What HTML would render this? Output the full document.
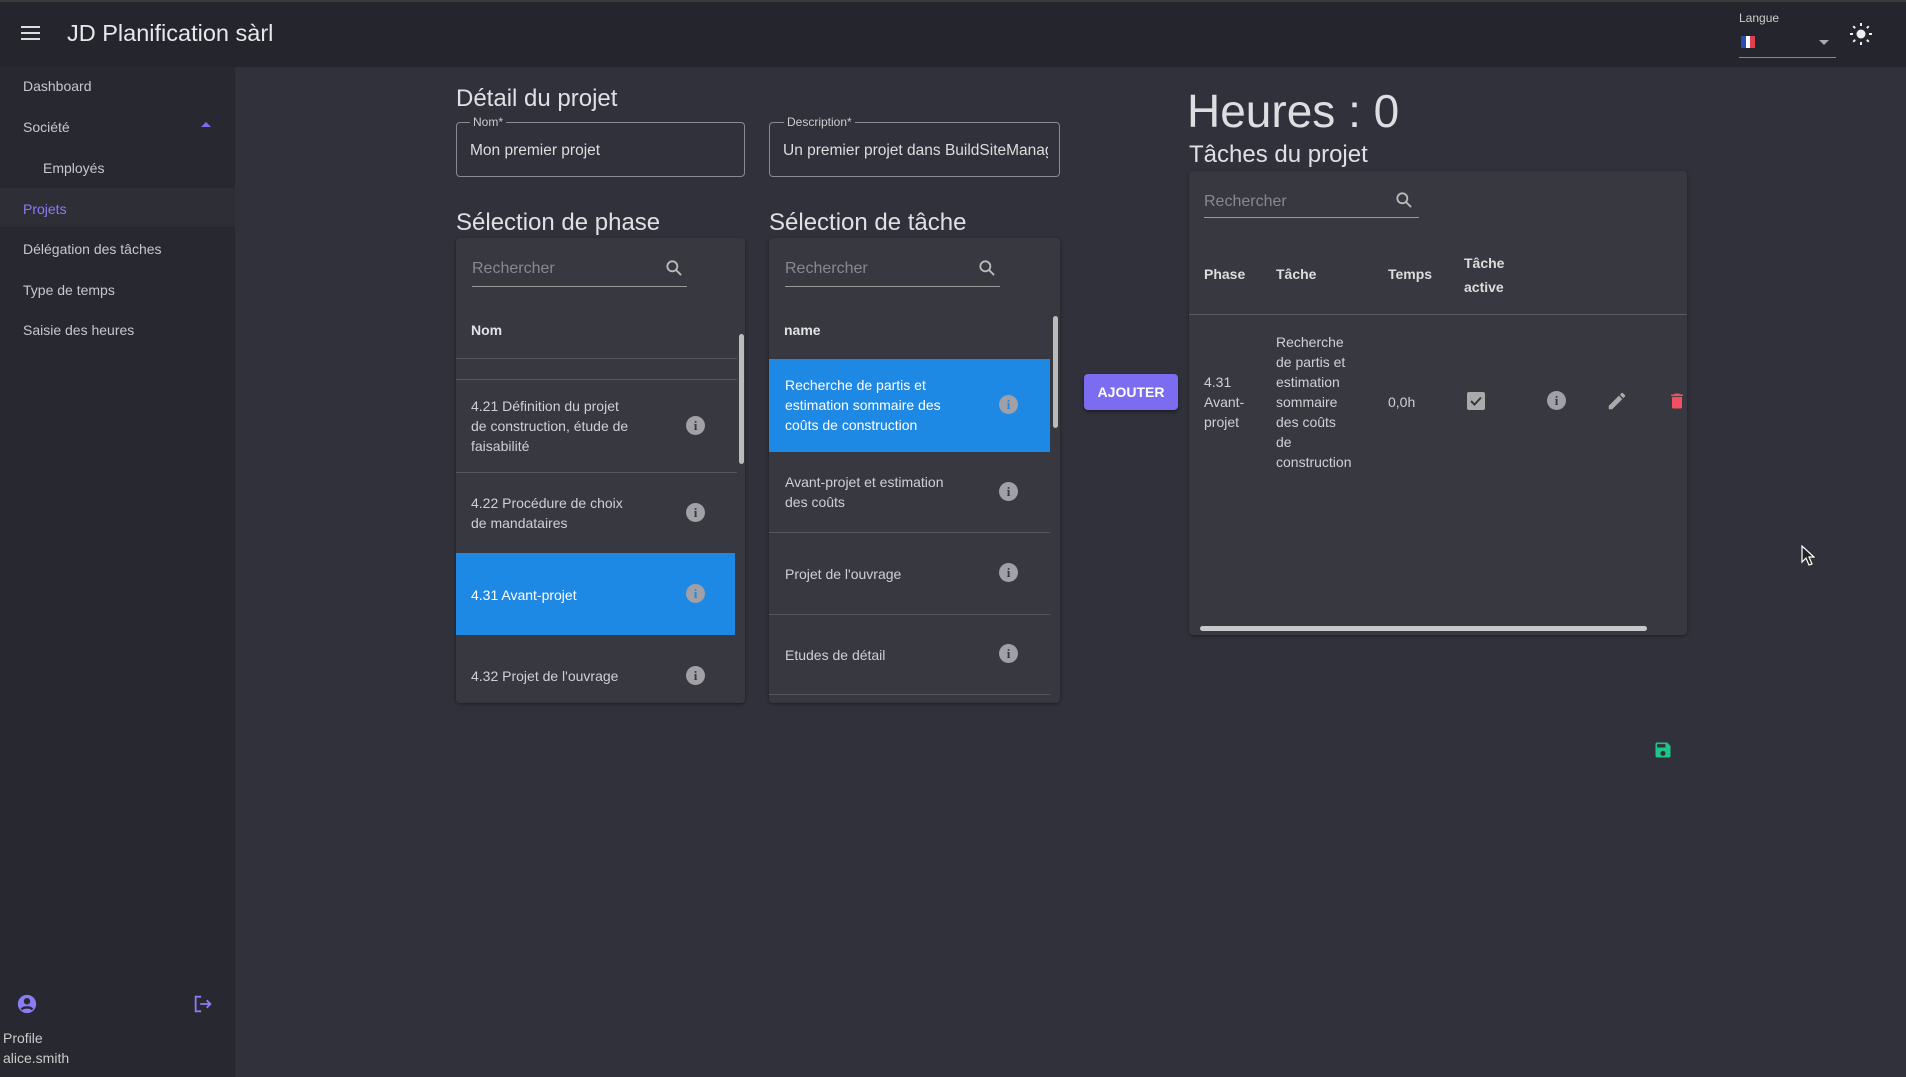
<!DOCTYPE html>
<html><head><meta charset="utf-8"><style>
*{box-sizing:border-box;margin:0;padding:0}
body{width:1906px;height:1077px;overflow:hidden;background:#30313a;font-family:"Liberation Sans",sans-serif;color:#e2e2e6;position:relative}
.a{position:absolute}
.hdr{left:0;top:0;width:1906px;height:67px;background:#25262d;border-top:2px solid #3a3a3a}
.side{left:0;top:67px;width:235px;height:1010px;background:#272830}
.si{position:absolute;left:23px;font-size:14px;color:#c8c8cc}
.card{background:#373840;border-radius:4px;box-shadow:0 1px 3px rgba(0,0,0,.4)}
.h2{font-size:24px;color:#e0e0e4}
.fld{border:1px solid #8a8a90;border-radius:4px}
.lbl{font-size:12px;color:#ccc;background:#30313a;padding:0 3px}
.srch{font-size:16px;color:#88888e}
.line{height:1px;background:#55565e}
.it{position:absolute;font-size:14px;line-height:20px;color:#d0d0d4}
.info{position:absolute;width:19px;height:19px;border-radius:50%;background:#a0a0a6;color:#373840;font-weight:bold;font-size:13px;text-align:center;line-height:19px;font-family:"Liberation Serif",serif}
.sel{background:#1e88e5}
</style></head><body>
<div class="a hdr"></div>
<div class="a" style="left:21px;top:26px;width:19px;height:2px;background:#ddd;box-shadow:0 6px 0 #ddd,0 12px 0 #ddd"></div>
<div class="a" style="left:67px;top:20px;font-size:23.5px;color:#e8e8ec">JD Planification sàrl</div>
<div class="a" style="left:1739px;top:11px;font-size:12px;color:#ccc">Langue</div>
<div class="a" style="left:1741px;top:36px;width:14px;height:12px;display:flex"><div style="flex:1;background:#2a4bb0"></div><div style="flex:1;background:#fff"></div><div style="flex:1;background:#e04050"></div></div>
<div class="a" style="left:1819px;top:40px;border:5px solid transparent;border-top-color:#aaa"></div>
<div class="a" style="left:1739px;top:57px;width:97px;height:1px;background:#888"></div>
<svg class="a" style="left:1849px;top:22px" width="24" height="24" viewBox="0 0 24 24"><circle cx="12" cy="12" r="4.5" fill="#eee"/><g stroke="#eee" stroke-width="2"><path d="M12 1v3M12 20v3M1 12h3M20 12h3M4.2 4.2l2 2M17.8 17.8l2 2M4.2 19.8l2-2M17.8 6.2l2-2"/></g></svg>

<div class="a side"></div>
<div class="si" style="top:78px">Dashboard</div>
<div class="si" style="top:119px">Société</div>
<div class="a" style="left:201px;top:122px;border:5px solid transparent;border-bottom-color:#7c6cf0;border-top:0"></div>
<div class="si" style="top:160px;left:43px">Employés</div>
<div class="a" style="left:0;top:188px;width:235px;height:39px;background:#2e2f36"></div>
<div class="si" style="top:201px;color:#8a7cf5">Projets</div>
<div class="si" style="top:241px">Délégation des tâches</div>
<div class="si" style="top:282px">Type de temps</div>
<div class="si" style="top:322px">Saisie des heures</div>
<svg class="a" style="left:16px;top:993px" width="22" height="22" viewBox="0 0 24 24"><circle cx="12" cy="12" r="10" fill="#8a7cf5"/><circle cx="12" cy="9" r="3.5" fill="#272830"/><path d="M6 18c2-3 10-3 12 0" stroke="#272830" stroke-width="2.5" fill="none"/></svg>
<svg class="a" style="left:192px;top:993px" width="22" height="22" viewBox="0 0 24 24" fill="none" stroke="#8a7cf5" stroke-width="2"><path d="M10 4H4v16h6M9 12h11M16 8l4 4-4 4"/></svg>
<div class="a" style="left:3px;top:1030px;font-size:14px;color:#ccc">Profile</div>
<div class="a" style="left:3px;top:1050px;font-size:14px;color:#ccc">alice.smith</div>

<div class="a h2" style="left:456px;top:85px">Détail du projet</div>
<div class="a fld" style="left:456px;top:122px;width:289px;height:55px"></div>
<div class="a lbl" style="left:470px;top:115px">Nom*</div>
<div class="a" style="left:470px;top:142px;font-size:15.5px;color:#ddd">Mon premier projet</div>
<div class="a fld" style="left:769px;top:122px;width:291px;height:55px;overflow:hidden"><div style="position:absolute;left:13px;top:19px;width:265px;overflow:hidden;font-size:15.5px;color:#ddd;white-space:nowrap">Un premier projet dans BuildSiteManager</div></div>
<div class="a lbl" style="left:784px;top:115px">Description*</div>

<div class="a h2" style="left:456px;top:209px">Sélection de phase</div>
<div class="a card" style="left:456px;top:238px;width:289px;height:465px;overflow:hidden">
 <div class="a srch" style="left:16px;top:22px">Rechercher</div>
 <svg class="a" style="left:208px;top:20px" width="20" height="20" viewBox="0 0 24 24" fill="none" stroke="#bbb" stroke-width="2.2"><circle cx="10" cy="10" r="6"/><path d="M14.5 14.5l6 6"/></svg>
 <div class="a" style="left:16px;top:48px;width:215px;height:1px;background:#999"></div>
 <div class="a" style="left:15px;top:84px;font-size:14px;font-weight:bold">Nom</div>
 <div class="a line" style="left:0;top:120px;width:281px"></div>
 <div class="a line" style="left:0;top:141px;width:281px"></div>
 <div class="it" style="left:15px;top:158px">4.21 Définition du projet<br>de construction, étude de<br>faisabilité</div>
 <div class="info" style="left:230px;top:178px">i</div>
 <div class="a line" style="left:0;top:234px;width:281px"></div>
 <div class="it" style="left:15px;top:255px">4.22 Procédure de choix<br>de mandataires</div>
 <div class="info" style="left:230px;top:265px">i</div>
 <div class="a sel" style="left:0;top:315px;width:279px;height:82px"></div>
 <div class="it" style="left:15px;top:347px;color:#fff">4.31 Avant-projet</div>
 <div class="info" style="left:230px;top:346px;color:#1e88e5">i</div>
 <div class="it" style="left:15px;top:428px">4.32 Projet de l'ouvrage</div>
 <div class="info" style="left:230px;top:428px">i</div>
 <div class="a" style="left:283px;top:96px;width:5px;height:130px;background:#bbb;border-radius:3px"></div>
</div>

<div class="a h2" style="left:769px;top:209px">Sélection de tâche</div>
<div class="a card" style="left:769px;top:238px;width:291px;height:465px;overflow:hidden">
 <div class="a srch" style="left:16px;top:22px">Rechercher</div>
 <svg class="a" style="left:208px;top:20px" width="20" height="20" viewBox="0 0 24 24" fill="none" stroke="#bbb" stroke-width="2.2"><circle cx="10" cy="10" r="6"/><path d="M14.5 14.5l6 6"/></svg>
 <div class="a" style="left:16px;top:48px;width:215px;height:1px;background:#999"></div>
 <div class="a" style="left:15px;top:84px;font-size:14px;font-weight:bold">name</div>
 <div class="a sel" style="left:0;top:121px;width:281px;height:93px"></div>
 <div class="it" style="left:16px;top:137px;color:#fff">Recherche de partis et<br>estimation sommaire des<br>coûts de construction</div>
 <div class="info" style="left:230px;top:157px;color:#1e88e5">i</div>
 <div class="it" style="left:16px;top:234px">Avant-projet et estimation<br>des coûts</div>
 <div class="info" style="left:230px;top:244px">i</div>
 <div class="a line" style="left:0;top:294px;width:281px"></div>
 <div class="it" style="left:16px;top:326px">Projet de l'ouvrage</div>
 <div class="info" style="left:230px;top:325px">i</div>
 <div class="a line" style="left:0;top:376px;width:281px"></div>
 <div class="it" style="left:16px;top:407px">Etudes de détail</div>
 <div class="info" style="left:230px;top:406px">i</div>
 <div class="a line" style="left:0;top:456px;width:281px"></div>
 <div class="a" style="left:284px;top:78px;width:5px;height:112px;background:#bbb;border-radius:3px"></div>
</div>

<div class="a" style="left:1084px;top:374px;width:94px;height:36px;background:#7c6cf0;border-radius:4px;color:#fff;font-size:14px;font-weight:bold;text-align:center;line-height:36px;box-shadow:0 2px 3px rgba(0,0,0,.4)">AJOUTER</div>

<div class="a" style="left:1187px;top:84px;font-size:46px;color:#dedee2">Heures : 0</div>
<div class="a h2" style="left:1189px;top:141px">Tâches du projet</div>
<div class="a card" style="left:1189px;top:171px;width:498px;height:464px">
 <div class="a srch" style="left:15px;top:22px">Rechercher</div>
 <svg class="a" style="left:205px;top:19px" width="20" height="20" viewBox="0 0 24 24" fill="none" stroke="#bbb" stroke-width="2.2"><circle cx="10" cy="10" r="6"/><path d="M14.5 14.5l6 6"/></svg>
 <div class="a" style="left:15px;top:46px;width:215px;height:1px;background:#999"></div>
 <div class="it" style="left:15px;top:93px;font-weight:bold;color:#ddd">Phase</div>
 <div class="it" style="left:87px;top:93px;font-weight:bold;color:#ddd">Tâche</div>
 <div class="it" style="left:199px;top:93px;font-weight:bold;color:#ddd">Temps</div>
 <div class="it" style="left:275px;top:80px;font-weight:bold;color:#ddd;line-height:24px">Tâche<br>active</div>
 <div class="a line" style="left:0;top:143px;width:498px;background:#5a5b62"></div>
 <div class="it" style="left:15px;top:201px">4.31<br>Avant-<br>projet</div>
 <div class="it" style="left:87px;top:161px">Recherche<br>de partis et<br>estimation<br>sommaire<br>des coûts<br>de<br>construction</div>
 <div class="it" style="left:199px;top:221px">0,0h</div>
 <div class="a" style="left:278px;top:221px;width:18px;height:18px;background:#aaa;border-radius:2px"><svg width="18" height="18" viewBox="0 0 18 18"><path d="M4 9l3.5 3.5L14 5.5" stroke="#373840" stroke-width="2" fill="none"/></svg></div>
 <div class="info" style="left:358px;top:220px">i</div>
 <svg class="a" style="left:417px;top:219px" width="22" height="22" viewBox="0 0 24 24"><path d="M3 17.25V21h3.75L17.81 9.94l-3.75-3.75L3 17.25zM20.71 7.04a1 1 0 000-1.41l-2.34-2.34a1 1 0 00-1.41 0l-1.83 1.83 3.75 3.75 1.83-1.83z" fill="#aaa"/></svg>
 <svg class="a" style="left:478px;top:219px" width="20" height="22" viewBox="0 0 24 24"><path d="M6 19a2 2 0 002 2h8a2 2 0 002-2V7H6v12zM19 4h-3.5l-1-1h-5l-1 1H5v2h14V4z" fill="#f05060"/></svg>
 <div class="a" style="left:11px;top:455px;width:447px;height:5px;background:#c8c8cc;border-radius:3px"></div>
</div>

<svg class="a" style="left:1653px;top:740px" width="20" height="20" viewBox="0 0 24 24"><path d="M17 3H5a2 2 0 00-2 2v14a2 2 0 002 2h14a2 2 0 002-2V7l-4-4zm-5 16a3 3 0 110-6 3 3 0 010 6zm3-10H5V5h10v4z" fill="#1fc48a"/></svg>
<svg class="a" style="left:1801px;top:545px" width="14" height="22" viewBox="0 0 14 22"><path d="M1 1v16l4-4 3 7 3-1-3-7h5z" fill="#222" stroke="#fff" stroke-width="1.2"/></svg>
</body></html>
